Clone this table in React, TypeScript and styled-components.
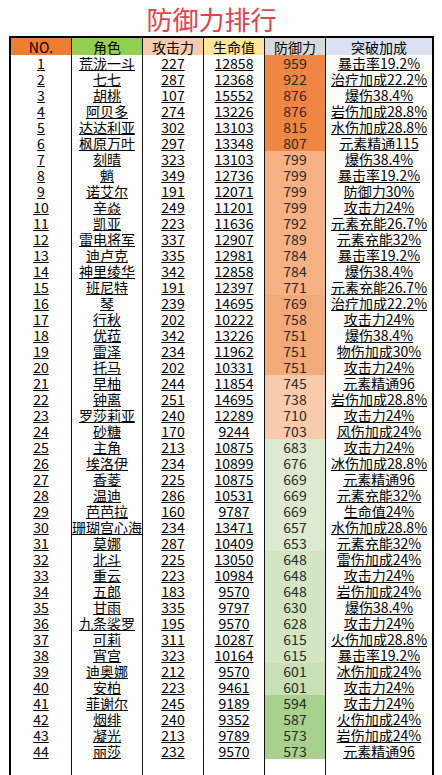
import React from 'react';
import styled, { createGlobalStyle } from 'styled-components';

const GlobalStyle = createGlobalStyle`
  html, body {
    margin: 0;
    padding: 0;
    background: #ffffff;
    overflow: hidden;
  }
  body {
    font-family: "Liberation Sans Narrow", "Noto Sans CJK SC", sans-serif;
    color: #000;
  }
`;

interface Hero {
  name: string;
  atk: number;
  hp: number;
  def: number;
  bonus: string;
}

const heroes: Hero[] = [
  { name: '荒泷一斗', atk: 227, hp: 12858, def: 959, bonus: '暴击率19.2%' },
  { name: '七七', atk: 287, hp: 12368, def: 922, bonus: '治疗加成22.2%' },
  { name: '胡桃', atk: 107, hp: 15552, def: 876, bonus: '爆伤38.4%' },
  { name: '阿贝多', atk: 274, hp: 13226, def: 876, bonus: '岩伤加成28.8%' },
  { name: '达达利亚', atk: 302, hp: 13103, def: 815, bonus: '水伤加成28.8%' },
  { name: '枫原万叶', atk: 297, hp: 13348, def: 807, bonus: '元素精通115' },
  { name: '刻晴', atk: 323, hp: 13103, def: 799, bonus: '爆伤38.4%' },
  { name: '魈', atk: 349, hp: 12736, def: 799, bonus: '暴击率19.2%' },
  { name: '诺艾尔', atk: 191, hp: 12071, def: 799, bonus: '防御力30%' },
  { name: '辛焱', atk: 249, hp: 11201, def: 799, bonus: '攻击力24%' },
  { name: '凯亚', atk: 223, hp: 11636, def: 792, bonus: '元素充能26.7%' },
  { name: '雷电将军', atk: 337, hp: 12907, def: 789, bonus: '元素充能32%' },
  { name: '迪卢克', atk: 335, hp: 12981, def: 784, bonus: '暴击率19.2%' },
  { name: '神里绫华', atk: 342, hp: 12858, def: 784, bonus: '爆伤38.4%' },
  { name: '班尼特', atk: 191, hp: 12397, def: 771, bonus: '元素充能26.7%' },
  { name: '琴', atk: 239, hp: 14695, def: 769, bonus: '治疗加成22.2%' },
  { name: '行秋', atk: 202, hp: 10222, def: 758, bonus: '攻击力24%' },
  { name: '优菈', atk: 342, hp: 13226, def: 751, bonus: '爆伤38.4%' },
  { name: '雷泽', atk: 234, hp: 11962, def: 751, bonus: '物伤加成30%' },
  { name: '托马', atk: 202, hp: 10331, def: 751, bonus: '攻击力24%' },
  { name: '早柚', atk: 244, hp: 11854, def: 745, bonus: '元素精通96' },
  { name: '钟离', atk: 251, hp: 14695, def: 738, bonus: '岩伤加成28.8%' },
  { name: '罗莎莉亚', atk: 240, hp: 12289, def: 710, bonus: '攻击力24%' },
  { name: '砂糖', atk: 170, hp: 9244, def: 703, bonus: '风伤加成24%' },
  { name: '主角', atk: 213, hp: 10875, def: 683, bonus: '攻击力24%' },
  { name: '埃洛伊', atk: 234, hp: 10899, def: 676, bonus: '冰伤加成28.8%' },
  { name: '香菱', atk: 225, hp: 10875, def: 669, bonus: '元素精通96' },
  { name: '温迪', atk: 286, hp: 10531, def: 669, bonus: '元素充能32%' },
  { name: '芭芭拉', atk: 160, hp: 9787, def: 669, bonus: '生命值24%' },
  { name: '珊瑚宫心海', atk: 234, hp: 13471, def: 657, bonus: '水伤加成28.8%' },
  { name: '莫娜', atk: 287, hp: 10409, def: 653, bonus: '元素充能32%' },
  { name: '北斗', atk: 225, hp: 13050, def: 648, bonus: '雷伤加成24%' },
  { name: '重云', atk: 223, hp: 10984, def: 648, bonus: '攻击力24%' },
  { name: '五郎', atk: 183, hp: 9570, def: 648, bonus: '岩伤加成24%' },
  { name: '甘雨', atk: 335, hp: 9797, def: 630, bonus: '爆伤38.4%' },
  { name: '九条裟罗', atk: 195, hp: 9570, def: 628, bonus: '攻击力24%' },
  { name: '可莉', atk: 311, hp: 10287, def: 615, bonus: '火伤加成28.8%' },
  { name: '宵宫', atk: 323, hp: 10164, def: 615, bonus: '暴击率19.2%' },
  { name: '迪奥娜', atk: 212, hp: 9570, def: 601, bonus: '冰伤加成24%' },
  { name: '安柏', atk: 223, hp: 9461, def: 601, bonus: '攻击力24%' },
  { name: '菲谢尔', atk: 245, hp: 9189, def: 594, bonus: '攻击力24%' },
  { name: '烟绯', atk: 240, hp: 9352, def: 587, bonus: '火伤加成24%' },
  { name: '凝光', atk: 213, hp: 9789, def: 573, bonus: '岩伤加成24%' },
  { name: '丽莎', atk: 232, hp: 9570, def: 573, bonus: '元素精通96' },
];

// fill bands of the defence column, like the sheet's colour scale
function defColor(def: number) {
  if (def >= 800) return '#ef8742';
  if (def >= 770) return '#f4b183';
  if (def >= 750) return '#f2aa7a';
  if (def >= 700) return '#f8cbad';
  if (def >= 650) return '#dcebd0';
  if (def >= 610) return '#d3e6c4';
  if (def >= 600) return '#c7e0b5';
  return '#a9d18e';
}

export default function App() {
  return (
    <>
      <GlobalStyle />
      <Page>
        <Title>防御力排行</Title>
        <Sheet>
          <HeaderRow>
            <HeaderCell $bg="#ed7d31"><Label>NO.</Label></HeaderCell>
            <HeaderCell $bg="#92d050"><Label>角色</Label></HeaderCell>
            <HeaderCell $bg="#f8cbad"><Label>攻击力</Label></HeaderCell>
            <HeaderCell $bg="#ffe699"><Label>生命值</Label></HeaderCell>
            <HeaderCell $bg="#d9d9d9"><Label>防御力</Label></HeaderCell>
            <HeaderCell $bg="#d9e1f2"><Label>突破加成</Label></HeaderCell>
          </HeaderRow>
          {heroes.map((h, i) => (
            <Row key={h.name}>
              <Cell><Text>{i + 1}</Text></Cell>
              <Cell><Text>{h.name}</Text></Cell>
              <Cell><Text>{h.atk}</Text></Cell>
              <Cell><Text>{h.hp}</Text></Cell>
              <DefCell $bg={defColor(h.def)}><Label>{h.def}</Label></DefCell>
              <Cell><Text>{h.bonus}</Text></Cell>
            </Row>
          ))}
          <Row>
            <Cell />
            <Cell />
            <Cell />
            <Cell />
            <Cell />
            <Cell />
          </Row>
        </Sheet>
      </Page>
    </>
  );
}

const columns = '61px 71px 61px 61px 61px 106px';

const Page = styled.div`
  padding-left: 9px;
  width: 425px;
`;

const Title = styled.h1`
  margin: 0;
  height: 36px;
  display: flex;
  align-items: center;
  justify-content: center;
  padding-right: 20px;
  padding-top: 1px;
  box-sizing: border-box;
  font-family: "Noto Sans CJK SC", sans-serif;
  font-weight: 400;
  font-size: 26px;
  line-height: 30px;
  color: #e6404a;
`;

const Sheet = styled.div`
  border-left: 2px solid #000;
  border-right: 2px solid #000;
  border-top: 2px solid #000;
`;

const Row = styled.div`
  display: grid;
  grid-template-columns: ${columns};
  height: 16px;
`;

const HeaderRow = styled(Row)`
  height: 17px;
`;

const Cell = styled.div`
  box-sizing: border-box;
  border-right: 1px solid #111;
  display: flex;
  justify-content: center;
  align-items: flex-start;
  font-size: 14px;
  line-height: 16px;
  white-space: nowrap;

  &:last-child {
    border-right: none;
  }
`;

const HeaderCell = styled(Cell)<{ $bg: string }>`
  background: ${(p) => p.$bg};
  align-items: center;
`;

const DefCell = styled(Cell)<{ $bg: string }>`
  background: ${(p) => p.$bg};
  color: #2a2a2a;
`;

const Label = styled.span`
  display: inline-block;
  height: 16px;
  line-height: 16px;
`;

const Text = styled(Label)`
  text-decoration: underline;
  text-decoration-thickness: 1px;
  text-underline-offset: 1px;
`;
